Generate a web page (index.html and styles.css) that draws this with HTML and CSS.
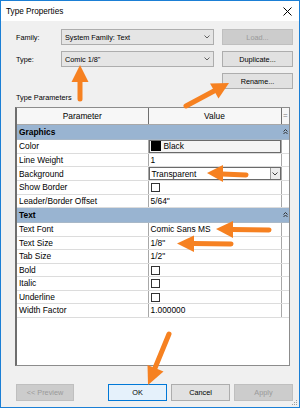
FILE: index.html
```html
<!DOCTYPE html>
<html lang="en">
<head>
    <meta charset="UTF-8">
    <meta name="viewport" content="width=device-width, initial-scale=1.0">
    <title>Type Properties</title>
    <link rel="stylesheet" href="styles.css">
</head>
<body>
    <div class="window">
        <div class="titlebar">
            <span>Type Properties</span>
            <svg class="close" width="9" height="9" viewBox="0 0 9 9">
                <path d="M0.5 0.5 L8.5 8.5 M8.5 0.5 L0.5 8.5" stroke="#000" stroke-width="1" fill="none"/>
            </svg>
        </div>

        <div class="content">
            <div class="top-grid">
                <label>Family:</label>
                <div class="combo">
                    <span>System Family: Text</span>
                    <svg width="6" height="4" viewBox="0 0 6 4"><path d="M0.5 0.5 L3 3 L5.5 0.5" stroke="#606060" fill="none"/></svg>
                </div>
                <button class="btn disabled">Load...</button>

                <label>Type:</label>
                <div class="combo">
                    <span>Comic 1/8"</span>
                    <svg width="6" height="4" viewBox="0 0 6 4"><path d="M0.5 0.5 L3 3 L5.5 0.5" stroke="#606060" fill="none"/></svg>
                </div>
                <button class="btn">Duplicate...</button>

                <button class="btn span-btn">Rename...</button>
            </div>

            <div class="section-label">Type Parameters</div>

            <div class="grid-wrap">
                <table class="params">
                    <colgroup>
                        <col class="col-name">
                        <col class="col-value">
                        <col class="col-side">
                    </colgroup>
                    <thead>
                        <tr>
                            <th>Parameter</th>
                            <th>Value</th>
                            <th class="side-head">=</th>
                        </tr>
                    </thead>
                    <tbody>
                        <tr class="group">
                            <td colspan="2">Graphics</td>
                            <td class="group-icon"><svg width="5" height="6" viewBox="0 0 5 6"><path d="M0.5 2.5 L2.5 0.5 L4.5 2.5 M0.5 5 L2.5 3 L4.5 5" stroke="#333" fill="none"/></svg></td>
                        </tr>
                        <tr>
                            <td>Color</td>
                            <td><div class="color-box"><span class="swatch"></span>Black</div></td>
                            <td class="side"></td>
                        </tr>
                        <tr>
                            <td>Line Weight</td>
                            <td>1</td>
                            <td class="side"></td>
                        </tr>
                        <tr>
                            <td>Background</td>
                            <td>
                                <div class="select">
                                    <span>Transparent</span>
                                    <span class="select-btn"><svg width="6" height="4" viewBox="0 0 6 4"><path d="M0.5 0.5 L3 3 L5.5 0.5" stroke="#404040" fill="none"/></svg></span>
                                </div>
                            </td>
                            <td class="side"></td>
                        </tr>
                        <tr>
                            <td>Show Border</td>
                            <td><span class="check"></span></td>
                            <td class="side"></td>
                        </tr>
                        <tr>
                            <td>Leader/Border Offset</td>
                            <td>5/64"</td>
                            <td class="side"></td>
                        </tr>
                        <tr class="group">
                            <td colspan="2">Text</td>
                            <td class="group-icon"><svg width="5" height="6" viewBox="0 0 5 6"><path d="M0.5 2.5 L2.5 0.5 L4.5 2.5 M0.5 5 L2.5 3 L4.5 5" stroke="#333" fill="none"/></svg></td>
                        </tr>
                        <tr>
                            <td>Text Font</td>
                            <td>Comic Sans MS</td>
                            <td class="side"></td>
                        </tr>
                        <tr>
                            <td>Text Size</td>
                            <td>1/8"</td>
                            <td class="side"></td>
                        </tr>
                        <tr>
                            <td>Tab Size</td>
                            <td>1/2"</td>
                            <td class="side"></td>
                        </tr>
                        <tr>
                            <td>Bold</td>
                            <td><span class="check"></span></td>
                            <td class="side"></td>
                        </tr>
                        <tr>
                            <td>Italic</td>
                            <td><span class="check"></span></td>
                            <td class="side"></td>
                        </tr>
                        <tr>
                            <td>Underline</td>
                            <td><span class="check"></span></td>
                            <td class="side"></td>
                        </tr>
                        <tr>
                            <td>Width Factor</td>
                            <td>1.000000</td>
                            <td class="side"></td>
                        </tr>
                    </tbody>
                </table>
            </div>

            <div class="actions">
                <button class="btn disabled preview">&lt;&lt; Preview</button>
                <button class="btn default">OK</button>
                <button class="btn">Cancel</button>
                <button class="btn disabled">Apply</button>
            </div>
        </div>

        <!-- resize grip in the corner -->
        <svg class="grip" width="7" height="7" viewBox="0 0 7 7">
            <g fill="#a0a0a0">
                <rect x="5" y="1" width="1" height="1"/>
                <rect x="3" y="3" width="1" height="1"/>
                <rect x="5" y="3" width="1" height="1"/>
                <rect x="1" y="5" width="1" height="1"/>
                <rect x="3" y="5" width="1" height="1"/>
                <rect x="5" y="5" width="1" height="1"/>
            </g>
        </svg>

        <!-- orange callout arrows drawn over the dialog -->
        <svg class="callouts" width="300" height="409" viewBox="0 0 300 409">
            <g stroke="#f68121" stroke-width="5" stroke-linecap="round" fill="none">
                <path d="M80 99 L80 80"/>
                <path d="M186 106 L214 91"/>
                <path d="M246 175 L222 174"/>
                <path d="M269 230 L232 229.5"/>
                <path d="M231 244 L193 243.5"/>
                <path d="M169 334 L155 368"/>
            </g>
            <g fill="#f68121">
                <polygon points="80,65 71.5,82 88.5,82"/>
                <polygon points="229,83 210,83.5 218.5,98.5"/>
                <polygon points="207,173 223,165 223,182"/>
                <polygon points="216,229 233,221 233,238"/>
                <polygon points="177,243.5 194,235.5 194,252"/>
                <polygon points="148,385 147.5,365 163.5,371.5"/>
            </g>
        </svg>
    </div>
</body>
</html>
```

FILE: styles.css
```css
* {
    box-sizing: border-box;
}
body {
    margin: 0;
    font-family: "Liberation Sans", Arial, sans-serif;
    font-size: 7.3px;
    color: #000;
    background-color: #fff;
}
.window {
    position: relative;
    width: 300px;
    height: 408px;
    border: 1px solid #1b7fd5;
    background-color: #f0f0f0;
    display: flex;
    flex-direction: column;
}
.titlebar {
    height: 20px;
    background-color: #fff;
    display: flex;
    align-items: center;
    justify-content: space-between;
    padding: 0 7px 0 5px;
    font-size: 8.2px;
}
.content {
    flex: 1;
    display: flex;
    flex-direction: column;
    padding: 8px 6px 6px 14px;
}
.top-grid {
    display: grid;
    grid-template-columns: 46px 153px 79px;
    grid-auto-rows: 16px;
    row-gap: 6px;
    align-items: center;
}
.top-grid label {
    padding-left: 1px;
}
.combo {
    height: 16px;
    display: flex;
    align-items: center;
    justify-content: space-between;
    padding: 0 3px 0 3px;
    background-color: #e5e5e5;
    border: 1px solid #adadad;
}
.btn {
    font-family: inherit;
    font-size: 7.3px;
    height: 16px;
    padding: 0;
    color: #000;
    background-color: #e1e1e1;
    border: 1px solid #adadad;
}
.top-grid .btn {
    width: 71px;
    justify-self: end;
}
.top-grid .span-btn {
    grid-column: 3;
}
.btn.disabled {
    background-color: #cccccc;
    border-color: #bfbfbf;
    color: #9a9a9a;
}
.btn.default {
    background-color: #e5f1fb;
    border-color: #0078d7;
}
.section-label {
    margin-top: 3px;
    line-height: 12px;
    padding-left: 1px;
}
.grid-wrap {
    margin-top: 3px;
    width: 275px;
    height: 259px;
    background-color: #fff;
    border: 1px solid #8c8c8c;
    border-left: 2px solid #6e6e6e;
    overflow: hidden;
}
.params {
    width: 100%;
    border-collapse: collapse;
    table-layout: fixed;
    font-size: 8.4px;
}
.col-name {
    width: 131px;
}
.col-value {
    width: 133px;
}
.params th {
    height: 16px;
    font-weight: normal;
    background-color: #f7f7f7;
    border-right: 1px solid #6f6f6f;
    border-bottom: 1px solid #a8a8a8;
    padding: 0;
}
.params th.side-head {
    border-right: none;
    color: #777;
    font-size: 8px;
}
.params td {
    height: 13.5px;
    padding: 0 0 0 2px;
    border-bottom: 1px solid #dcdcdc;
    border-right: 1px solid #a8a8a8;
    white-space: nowrap;
    overflow: hidden;
}
.params td.side {
    border-right: none;
    padding: 0;
}
.params .group td {
    height: 15px;
    background-color: #99b4d1;
    font-weight: bold;
    border-right: none;
    border-bottom: 1px solid #a8b8c8;
}
.params .group td.group-icon {
    padding: 0;
    text-align: center;
}
.group-icon svg {
    display: block;
    margin: 0 auto;
}
.color-box {
    height: 13px;
    margin-left: -2px;
    display: flex;
    align-items: center;
    gap: 3px;
    background-color: #f4f4f4;
    border: 1px solid #6a6a6a;
}
.swatch {
    width: 10px;
    height: 10px;
    background-color: #000;
    margin-left: 1px;
}
.select {
    height: 13px;
    margin-left: -2px;
    display: flex;
    align-items: center;
    justify-content: space-between;
    padding-left: 2px;
    background-color: #fff;
    border: 1px solid #6a6a6a;
}
.select-btn {
    width: 10px;
    height: 100%;
    display: flex;
    align-items: center;
    justify-content: center;
    background-color: #ececec;
    border-left: 1px solid #9a9a9a;
}
.check {
    display: inline-block;
    vertical-align: middle;
    width: 9px;
    height: 9px;
    background-color: #fff;
    border: 1px solid #333;
}
.actions {
    margin-top: auto;
    display: flex;
    gap: 4px;
}
.actions .btn {
    width: 59px;
    height: 17px;
}
.actions .preview {
    width: 58px;
    margin-left: 1px;
    margin-right: auto;
}
.grip {
    position: absolute;
    right: 1px;
    bottom: 1px;
}
.callouts {
    position: absolute;
    left: -1px;
    top: -1px;
    pointer-events: none;
}
```
